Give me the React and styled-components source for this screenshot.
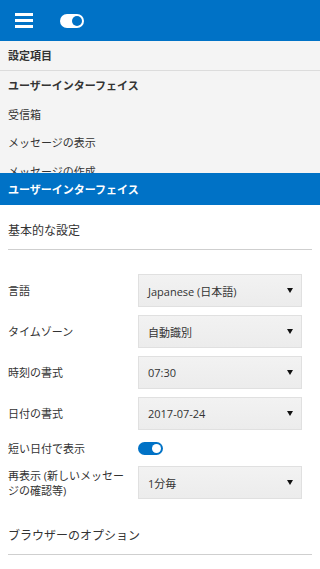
import React from 'react';
import styled, { createGlobalStyle } from 'styled-components';

const Global = createGlobalStyle`
  html, body { margin: 0; padding: 0; background: #fff; }
  body {
    font-family: "Open Sans", "Noto Sans CJK JP", sans-serif;
    color: #333;
    -webkit-font-smoothing: antialiased;
  }
`;

const Page = styled.div`
  width: 320px;
  height: 569px;
  overflow: hidden;
  background: #fff;
`;

const TopBar = styled.header`
  height: 41px;
  background: #0072c6;
  display: flex;
  align-items: center;
  padding-left: 15px;
  gap: 27px;
  box-sizing: border-box;
`;

const Burger = styled.div`
  width: 18px;
  display: flex;
  flex-direction: column;
  gap: 3px;
  span {
    display: block;
    height: 3px;
    background: #fff;
  }
`;

const Toggle = styled.div`
  width: ${p => p.$w}px;
  height: ${p => p.$h}px;
  border-radius: ${p => p.$h / 2}px;
  background: ${p => (p.$light ? '#fff' : '#0072c6')};
  display: flex;
  align-items: center;
  justify-content: flex-end;
  padding: 0 2px;
  box-sizing: border-box;
  &::after {
    content: '';
    width: ${p => p.$h - 4}px;
    height: ${p => p.$h - 4}px;
    border-radius: 50%;
    background: ${p => (p.$light ? '#0072c6' : '#fff')};
  }
`;

const NavPanel = styled.nav`
  height: 132px;
  overflow: hidden;
  background: #f4f4f4;
`;

const NavHead = styled.div`
  height: 29px;
  line-height: 29px;
  padding: 0 8px;
  font-size: 11px;
  font-weight: 700;
  border-bottom: 1px solid #dcdcdc;
`;

const NavItem = styled.div`
  height: 28.5px;
  line-height: 29px;
  padding: 0 8px;
  font-size: 11px;
  font-weight: ${p => (p.$active ? 700 : 400)};
`;

const SectionBar = styled.div`
  height: 32px;
  line-height: 33px;
  background: #0072c6;
  color: #fff;
  font-size: 11px;
  font-weight: 700;
  padding: 0 8px;
`;

const Content = styled.div`
  padding: 0 8px;
`;

const GroupTitle = styled.h2`
  margin: 0;
  font-size: 12px;
  font-weight: 400;
  line-height: 20px;
  padding: ${p => p.$top}px 0 8px;
  border-bottom: 1px solid #cfcfcf;
`;

const Form = styled.div`
  display: flex;
  flex-direction: column;
  gap: 8px;
  margin-top: 24px;
  margin-right: 10px;
`;

const Row = styled.div`
  display: grid;
  grid-template-columns: 130px 1fr;
  align-items: center;
  min-height: ${p => p.$h || 33}px;
`;

const Label = styled.div`
  font-size: 11px;
  line-height: 15px;
  padding-right: 10px;
`;

const Select = styled.div`
  height: 33px;
  box-sizing: border-box;
  border: 1px solid #e0e0e0;
  background: linear-gradient(#f2f2f2, #ececec);
  display: flex;
  align-items: center;
  justify-content: space-between;
  padding: 0 8px 0 9px;
  font-size: 11px;
  color: #333;
  &::after {
    content: '';
    border-left: 3px solid transparent;
    border-right: 3px solid transparent;
    border-top: 5px solid #111;
  }
`;

const nav = ['受信箱', 'メッセージの表示', 'メッセージの作成'];

const rows = [
  ['言語', 'Japanese (日本語)'],
  ['タイムゾーン', '自動識別'],
  ['時刻の書式', '07:30'],
  ['日付の書式', '2017-07-24'],
];

export default function App() {
  return (
    <Page>
      <Global />
      <TopBar>
        <Burger><span /><span /><span /></Burger>
        <Toggle $w={24} $h={14} $light />
      </TopBar>
      <NavPanel>
        <NavHead>設定項目</NavHead>
        <NavItem $active>ユーザーインターフェイス</NavItem>
        {nav.map(n => <NavItem key={n}>{n}</NavItem>)}
      </NavPanel>
      <SectionBar>ユーザーインターフェイス</SectionBar>
      <Content>
        <GroupTitle $top={16}>基本的な設定</GroupTitle>
        <Form>
          {rows.map(([l, v]) => (
            <Row key={l}>
              <Label>{l}</Label>
              <Select>{v}</Select>
            </Row>
          ))}
          <Row $h={20}>
            <Label>短い日付で表示</Label>
            <Toggle $w={25} $h={13} />
          </Row>
          <Row>
            <Label>再表示 (新しいメッセージの確認等)</Label>
            <Select>1分毎</Select>
          </Row>
        </Form>
        <GroupTitle $top={27}>ブラウザーのオプション</GroupTitle>
      </Content>
    </Page>
  );
}
